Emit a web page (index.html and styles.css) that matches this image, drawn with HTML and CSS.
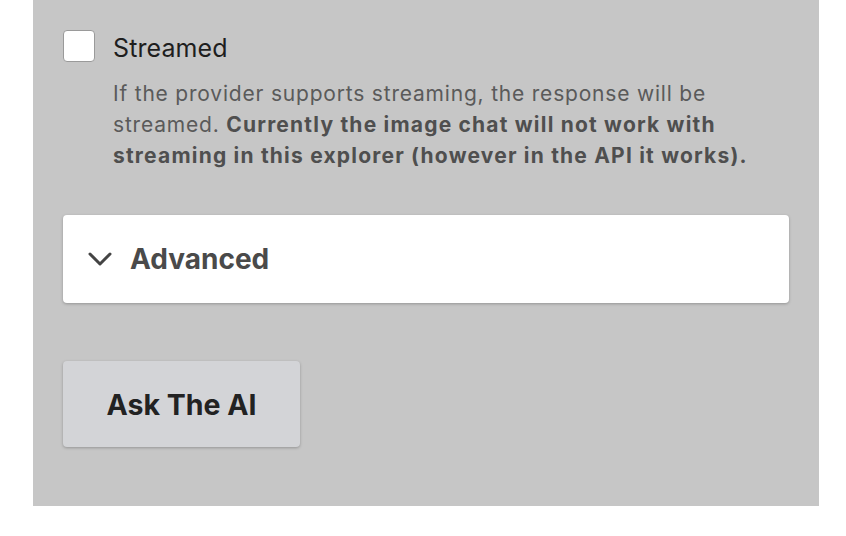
FILE: index.html
```html
<!DOCTYPE html>
<html>
<head>
<meta charset="utf-8">
<link rel="stylesheet" href="styles.css">
</head>
<body>
<div class="panel">
  <label class="check-row">
    <span class="checkbox"></span>
    <span class="check-label">Streamed</span>
  </label>
  <p class="help">If the provider supports streaming, the response will be streamed. <strong>Currently the image chat will not work with streaming in this explorer (however in the API it works).</strong></p>
  <div class="card">
    <svg class="chev" width="26" height="16" viewBox="0 0 26 16"><path d="M3 3 L13 13 L23 3" fill="none" stroke="#444" stroke-width="3" stroke-linecap="round" stroke-linejoin="round"/></svg>
    <span class="card-title">Advanced</span>
  </div>
  <button class="ask">Ask The AI</button>
</div>
</body>
</html>
```
FILE: styles.css
```css
html, body { margin: 0; padding: 0; background: #fff; }
body { font-family: Inter, "Noto Sans", sans-serif; }
.panel {
  margin-left: 33px;
  width: 786px;
  height: 506px;
  background: #c6c6c6;
  padding: 0 30px;
  box-sizing: border-box;
  display: flex;
  flex-direction: column;
  align-items: flex-start;
}
.check-row { display: flex; align-items: center; margin-top: 29px; gap: 18px; }
.checkbox {
  width: 32px; height: 32px; background: #fff; border-radius: 4px;
  border: 1px solid #9a9a9a; box-sizing: border-box; display: block;
}
.check-label { font-size: 25px; line-height: 30px; color: #1e1e1e; letter-spacing: 0.1px; padding-top: 4px; }
.help {
  margin: 15px 0 0 50px;
  font-size: 21px;
  line-height: 31px;
  color: #5a5a5a;
  letter-spacing: 0.8px;
  max-width: 660px;
}
.help strong { color: #4f4f4f; font-weight: 700; letter-spacing: 1.2px; }
.card {
  margin-top: 44px;
  width: 726px; height: 88px;
  background: #fff; border-radius: 4px;
  box-shadow: 0 1px 3px rgba(0,0,0,0.25);
  display: flex; align-items: center;
  box-sizing: border-box; padding-left: 24px; gap: 17px;
}
.card-title { font-size: 28px; font-weight: 700; color: #4a4a4a; }
.ask {
  margin-top: 58px;
  width: 237px; height: 86px;
  background: #d3d4d7; border: none; border-radius: 4px;
  box-shadow: 0 1px 3px rgba(0,0,0,0.25);
  font-family: Inter, "Noto Sans", sans-serif;
  font-size: 28.5px; font-weight: 700; color: #222;
}
```
